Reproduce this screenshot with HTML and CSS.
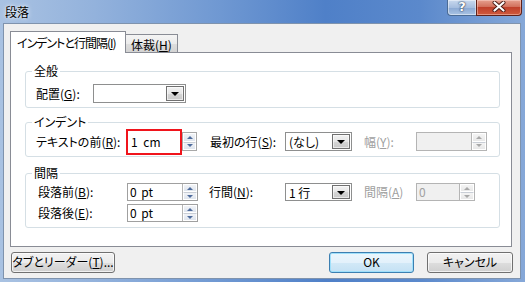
FILE: index.html
```html
<!DOCTYPE html>
<html lang="ja">
<head>
<meta charset="utf-8">
<title>段落</title>
<link rel="stylesheet" href="styles.css">
</head>
<body>
<div class="window">
  <div class="titlebar">
    <span class="title">段落</span>
    <div class="caption">
      <div class="cap-help">?</div>
      <div class="cap-close">
        <svg width="14" height="11" viewBox="0 0 14 11"><path d="M2.5 1.5 L11.5 9.5 M11.5 1.5 L2.5 9.5" stroke="#4a1a14" stroke-width="4" stroke-linecap="round"/><path d="M2.5 1.5 L11.5 9.5 M11.5 1.5 L2.5 9.5" stroke="#fff" stroke-width="2.2" stroke-linecap="round"/></svg>
      </div>
    </div>
  </div>
  <div class="client">
    <div class="tabs">
      <div class="tab tab-active">インデントと行間隔(<u>I</u>)</div>
      <div class="tab tab-idle">体裁(<u>H</u>)</div>
    </div>
    <div class="panel">
      <fieldset class="group g1">
        <legend>全般</legend>
        <div class="row r1">
          <span class="lbl w57">配置(<u>G</u>):</span>
          <div class="combo w93"><span class="val"></span><span class="dd"><i class="tri"></i></span></div>
        </div>
      </fieldset>
      <fieldset class="group g2">
        <legend>インデント</legend>
        <div class="row r2">
          <span class="lbl w90">テキストの前(<u>R</u>):</span>
          <div class="hl">1 cm</div>
          <div class="spin"><span class="sb"><i class="up"></i></span><span class="sb"><i class="dn"></i></span></div>
          <span class="lbl w75 ml13">最初の行(<u>S</u>):</span>
          <div class="combo w67"><span class="val">(なし)</span><span class="dd"><i class="tri"></i></span></div>
          <span class="lbl w52 ml12 dis">幅(<u>Y</u>):</span>
          <div class="spinbox disabled w71"><span class="txt"></span><div class="spin in"><span class="sb"><i class="up"></i></span><span class="sb"><i class="dn"></i></span></div></div>
        </div>
      </fieldset>
      <fieldset class="group g3">
        <legend>間隔</legend>
        <div class="row r3">
          <span class="lbl w89">段落前(<u>B</u>):</span>
          <div class="spinbox w71"><span class="txt">0 pt</span><div class="spin in"><span class="sb"><i class="up"></i></span><span class="sb"><i class="dn"></i></span></div></div>
          <span class="lbl w76 ml11">行間(<u>N</u>):</span>
          <div class="combo w67 h18"><span class="val">1 行</span><span class="dd"><i class="tri"></i></span></div>
          <span class="lbl w52 ml12 dis">間隔(<u>A</u>)</span>
          <div class="spinbox disabled w59"><span class="txt">0</span><div class="spin in"><span class="sb"><i class="up"></i></span><span class="sb"><i class="dn"></i></span></div></div>
        </div>
        <div class="row r3 second">
          <span class="lbl w89">段落後(<u>E</u>):</span>
          <div class="spinbox w71"><span class="txt">0 pt</span><div class="spin in"><span class="sb"><i class="up"></i></span><span class="sb"><i class="dn"></i></span></div></div>
        </div>
      </fieldset>
    </div>
    <div class="buttons">
      <div class="btn b-tabs">タブとリーダー(<u>T</u>)...</div>
      <div class="btn-right">
        <div class="btn b-ok">OK</div>
        <div class="btn b-cancel">キャンセル</div>
      </div>
    </div>
  </div>
</div>
</body>
</html>
```

FILE: styles.css
```css
html, body {
  margin: 0;
  padding: 0;
}
body {
  width: 525px;
  height: 282px;
  overflow: hidden;
  font-family: "Noto Sans CJK JP", "Noto Sans", sans-serif;
  font-size: 12px;
  font-feature-settings: "palt";
  color: #000;
}
* { box-sizing: border-box; }
u { text-decoration: underline; text-underline-offset: 1px; }

.window {
  width: 525px;
  height: 282px;
  display: flex;
  flex-direction: column;
  background: linear-gradient(to right, #a9c2e2 0%, #93b2dc 18%, #6f98d2 42%, #4f80c8 62%, #5b89cc 80%, #86a8d8 100%);
}

.titlebar {
  height: 23px;
  display: flex;
  justify-content: space-between;
  align-items: flex-start;
  flex: none;
}
.title {
  margin: 4px 0 0 5px;
  line-height: 15px;
  font-size: 12px;
  text-shadow: 0 0 5px rgba(255,255,255,0.9), 0 0 2px rgba(255,255,255,0.8);
}
.caption {
  display: flex;
  margin-right: 3px;
}
.cap-help {
  width: 29px;
  height: 16px;
  border: 1px solid #4b6b95;
  border-top: none;
  border-right: none;
  border-radius: 0 0 0 4px;
  background: linear-gradient(#c9d9ee, #a6bedf 50%, #8aa8d2 51%, #a9c3e4);
  color: #fff;
  font-family: "DejaVu Sans", sans-serif;
  font-weight: bold;
  font-size: 13px;
  line-height: 13px;
  text-align: center;
  text-shadow: 0 0 2px #1c2f4d, 0 0 1px #1c2f4d;
  box-shadow: inset 0 0 0 1px rgba(255,255,255,0.45);
}
.cap-close {
  width: 46px;
  height: 16px;
  border: 1px solid #5f2119;
  border-top: none;
  border-radius: 0 0 4px 0;
  background: linear-gradient(#e6a08f, #d2705c 45%, #c0402b 50%, #cf5a3c 100%);
  box-shadow: inset 0 0 0 1px rgba(255,220,210,0.45);
  display: flex;
  justify-content: center;
  padding-top: 1px;
}

.client {
  flex: 1;
  margin: 0 4px 3px 3px;
  background: #f0f0f0;
  border: 1px solid #7f93ad;
  padding: 7px 0 0 6px;
  display: flex;
  flex-direction: column;
}

.tabs {
  display: flex;
  align-items: flex-end;
  height: 22px;
}
.tab {
  line-height: 17px;
  white-space: nowrap;
  border: 1px solid #898c95;
  border-bottom: none;
}
.tab-active {
  position: relative;
  z-index: 1;
  width: 116px;
  height: 22px;
  padding: 2px 0 0 6px;
  background: #fff;
  letter-spacing: -1px;
}
.tab-idle {
  width: 52px;
  height: 19px;
  padding: 1px 0 0 5px;
  border-left: none;
  background: linear-gradient(#f4f4f4, #ebebeb 50%, #dddddd 51%, #d2d2d2);
}

.panel {
  width: 502px;
  height: 195px;
  margin-top: -1px;
  border: 1px solid #898c95;
  background: #fff;
  padding: 11px 0 0 14px;
}

.group {
  width: 475px;
  margin: 0;
  padding: 0;
  border: 1px solid #d5dfe5;
  border-radius: 3px;
  min-inline-size: 0;
}
.group legend {
  margin-left: 6px;
  padding: 0 2px;
  line-height: 14px;
  height: 14px;
}
.g1 { padding-bottom: 4px; }
.g2 { margin-top: 7px; padding-bottom: 5px; }
.g3 { margin-top: 9px; padding-bottom: 5px; }

.row {
  display: flex;
  align-items: center;
  white-space: nowrap;
}
.r1 { height: 19px; margin-top: 6px; padding-left: 10px; }
.r2 { height: 19px; margin-top: 3px; padding-left: 10px; }
.r3 { height: 18px; margin-top: 3px; padding-left: 12px; }
.r3.second { margin-top: 3px; }

.lbl { line-height: 14px; flex: none; }
.dis { color: #a0a0a0; }
.w57 { width: 57px; }
.w90 { width: 90px; }
.w89 { width: 89px; }
.w75 { width: 75px; }
.w76 { width: 76px; }
.w52 { width: 52px; }
.w93 { width: 93px; }
.w67 { width: 67px; }
.w71 { width: 71px; }
.w59 { width: 59px; }
.ml11 { margin-left: 11px; }
.ml12 { margin-left: 12px; }
.ml13 { margin-left: 13px; }

.combo {
  display: flex;
  height: 19px;
  flex: none;
  border: 1px solid #8e8f8f;
  background: #fff;
  padding: 1px;
}
.combo.h18 { height: 18px; }
.combo .val {
  flex: 1;
  line-height: 15px;
  padding-left: 2px;
}
.combo .dd {
  width: 18px;
  flex: none;
  border: 1px solid #707070;
  background: linear-gradient(#f2f2f2, #e6e6e6 50%, #d6d6d6 51%, #c9c9c9);
  display: flex;
  align-items: center;
  justify-content: center;
  box-shadow: inset 0 0 0 1px rgba(255,255,255,0.6);
}
.tri {
  width: 0;
  height: 0;
  border-left: 4px solid transparent;
  border-right: 4px solid transparent;
  border-top: 4px solid #000;
  margin-top: 1px;
}

.hl {
  width: 56px;
  height: 26px;
  margin: -3px 0;
  border: 2px solid #f0141c;
  padding-left: 3px;
  line-height: 21px;
  flex: none;
  background: #fff;
  word-spacing: 3px;
}

.spin {
  width: 15px;
  height: 19px;
  flex: none;
  border: 1px solid #a8a8a8;
  display: flex;
  flex-direction: column;
  background: #fff;
}
.spin .sb {
  flex: 1;
  display: flex;
  align-items: center;
  justify-content: center;
  background: linear-gradient(#f1f3f7, #dfe5ee);
  border: 1px solid #fff;
}
.spin .sb + .sb { border-top: 1px solid #c9ced6; }
.up, .dn {
  width: 0;
  height: 0;
  border-left: 3px solid transparent;
  border-right: 3px solid transparent;
}
.up { border-bottom: 3px solid #4d6b9c; }
.dn { border-top: 3px solid #4d6b9c; }

.spinbox {
  display: flex;
  height: 18px;
  flex: none;
  border: 1px solid #a0a0a0;
  background: #fff;
}
.spinbox .txt {
  flex: 1;
  padding-left: 2px;
  line-height: 16px;
  word-spacing: 2px;
}
.spin.in {
  height: 16px;
  border: none;
  border-left: 1px solid #b5b5b5;
}
.r2 .spinbox { height: 19px; }
.r2 .spin.in { height: 17px; }
.spinbox.disabled {
  background: #f0f0f0;
  border-color: #b4b4b4;
  color: #a0a0a0;
}
.spinbox.disabled .sb { background: linear-gradient(#f4f4f4, #e8e8e8); }
.spinbox.disabled .up { border-bottom-color: #a8a8a8; }
.spinbox.disabled .dn { border-top-color: #a8a8a8; }

.buttons {
  display: flex;
  justify-content: space-between;
  margin-top: 5px;
  padding: 0 7px 0 1px;
}
.btn-right { display: flex; gap: 13px; }
.btn {
  height: 21px;
  border: 1px solid #707070;
  border-radius: 3px;
  background: linear-gradient(#f2f2f2, #ebebeb 50%, #dddddd 51%, #cfcfcf);
  box-shadow: inset 0 0 0 1px rgba(255,255,255,0.7);
  text-align: center;
  line-height: 18px;
  white-space: nowrap;
}
.b-tabs { width: 104px; }
.b-ok {
  width: 85px;
  border-color: #3c7fb1;
  box-shadow: inset 0 0 0 1px #9fe0fb;
  background: linear-gradient(#eaf6fd, #e3f1fb 50%, #d2e9f7 51%, #c4e1f4);
}
.b-cancel { width: 86px; }
```
